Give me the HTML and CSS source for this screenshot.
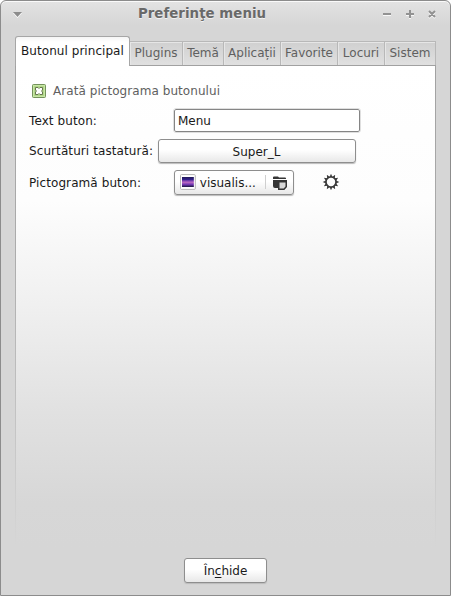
FILE: index.html
```
<!DOCTYPE html>
<html lang="ro">
<head>
<meta charset="utf-8">
<title>Preferinţe meniu</title>
<link rel="stylesheet" href="styles.css">
</head>
<body>
<div class="window">
  <header class="titlebar">
    <svg class="menu-arrow" width="9" height="7" viewBox="0 0 9 7"><path d="M0 2h9L4.500 7z" fill="#fff"/><path d="M0 1h9L4.500 6z" fill="#8c8c8c"/></svg>
    <h1 class="title">Preferinţe meniu</h1>
    <svg class="controls" width="56" height="12" viewBox="0 0 56 12" fill="none" stroke-width="2">
      <path stroke="#f8f8f8" d="M0 7h8M23 7h8M27 3v8M46 4l6 6M52 4l-6 6"/>
      <path stroke="#929292" d="M0 6h8M23 6h8M27 2v8M46 3l6 6M52 3l-6 6"/>
    </svg>
  </header>
  <nav class="tabs">
    <div class="tab active">Butonul principal</div>
    <div class="tab plugins">Plugins</div>
    <div class="tab theme">Temă</div>
    <div class="tab apps">Aplicații</div>
    <div class="tab favorites">Favorite</div>
    <div class="tab places">Locuri</div>
    <div class="tab system">Sistem</div>
  </nav>
  <main class="panel">
    <div class="check-row">
      <svg class="checkbox" width="14" height="14" viewBox="0 0 14 14"><rect x=".5" y=".5" width="13" height="13" rx="1" fill="#b1d888" stroke="#74925b"/><rect x="1.500" y="1.500" width="11" height="11" fill="none" stroke="#c7e6a6"/><path d="M3.500 3.500h2.500l1 1 1-1h2.500v2.500l-1 1 1 1v2.500h-2.500l-1-1-1 1h-2.500v-2.500l1-1-1-1z" fill="#fff" stroke="#66754f"/></svg>
      <span>Arată pictograma butonului</span>
    </div>
    <div class="row text-row"><span class="label">Text buton:</span><div class="entry">Menu</div></div>
    <div class="row key-row"><span class="label">Scurtături tastatură:</span><div class="button key">Super_L</div></div>
    <div class="row icon-row">
      <span class="label">Pictogramă buton:</span>
      <div class="button chooser">
        <svg class="thumb" width="16" height="16" viewBox="0 0 16 16"><defs><linearGradient id="sky" x2="0" y2="1"><stop stop-color="#211857"/><stop offset=".25" stop-color="#31208b"/><stop offset=".4" stop-color="#8a4ab8"/><stop offset=".55" stop-color="#b565be"/><stop offset=".75" stop-color="#7438b4"/><stop offset="1" stop-color="#19163f"/></linearGradient></defs><rect x=".5" y=".5" width="15" height="15" rx="1" fill="#fff" stroke="#b5b5b5"/><path fill="url(#sky)" d="M2 3h12v10H2z"/></svg>
        <span class="filename">visualis...</span>
        <span class="separator"></span>
        <svg class="folder" width="14" height="14" viewBox="0 0 14 14"><path d="M0 2.500V1.500Q0 .5 1 .5h4l1 1h6q1 0 1 1V3H0zM0 4h14v2H5v6H2q-2 0-2-2z" fill="#353535"/><path d="M5.750 5.750h7.500v5l-2.250 2.500h-5.250z" fill="#d8d8d8" stroke="#353535" stroke-width="1.500"/></svg>
      </div>
      <svg class="gear" width="18" height="18" viewBox="-9 -9 18 18" fill="none" stroke="#3b3b3b"><circle r="5" stroke-width="1.600"/><g fill="#3b3b3b" stroke="none"><path id="tooth" d="M-1.500-5L0-8.300 1.500-5z"/><use href="#tooth" transform="rotate(30)"/><use href="#tooth" transform="rotate(60)"/><use href="#tooth" transform="rotate(90)"/><use href="#tooth" transform="rotate(120)"/><use href="#tooth" transform="rotate(150)"/><use href="#tooth" transform="rotate(180)"/><use href="#tooth" transform="rotate(210)"/><use href="#tooth" transform="rotate(240)"/><use href="#tooth" transform="rotate(270)"/><use href="#tooth" transform="rotate(300)"/><use href="#tooth" transform="rotate(330)"/></g></svg>
    </div>
  </main>
  <footer class="actions"><div class="button close">În<u>c</u>hide</div></footer>
</div>
</body>
</html>
```

FILE: styles.css
```
* { box-sizing: border-box; }
body {
  margin: 0;
  background: #fff;
  font: 12px/16px "DejaVu Sans", sans-serif;
  color: #1a1a1a;
}
.window {
  display: flex;
  flex-direction: column;
  width: 451px;
  height: 596px;
  border: 1px solid #8c8c8c;
  border-radius: 6px 6px 0 0;
  background: linear-gradient(#e3e3e3, #d6d6d6 24px);
  box-shadow: inset 0 1px #fafafa;
  overflow: hidden;
}
.titlebar {
  display: flex;
  align-items: center;
  height: 35px;
  padding: 0 12px 10px;
}
.menu-arrow { margin-top: 2px; }
.title {
  flex: 1;
  margin: 0 0 0 -1px;
  text-align: center;
  font-size: 13.333px;
  letter-spacing: 0.05px;
  line-height: 18px;
  color: #696969;
  text-shadow: 0 1px #f2f2f2;
}
.controls { margin-right: -1px; }
.tabs {
  display: flex;
  align-items: flex-end;
  height: 29px;
  margin-left: 14px;
  flex: none;
}
.tab {
  height: 24px;
  border: solid #b8b8b8;
  border-width: 1px 1px 0 0;
  background: linear-gradient(#d0d0d0, #e0e0e0);
  box-shadow: inset 1px 1px #e6e6e6;
  color: #606060;
  text-align: center;
  line-height: 23px;
  white-space: nowrap;
}
.tab.active {
  position: relative;
  width: 115px;
  height: 30px;
  margin-bottom: -1px;
  border: 1px solid #a6a6a6;
  border-bottom: 0;
  border-radius: 3px 3px 0 0;
  background: linear-gradient(#f5f5f5, #fff 5px);
  box-shadow: none;
  color: #1a1a1a;
  letter-spacing: 0.05px;
  line-height: 28px;
}
.plugins { width: 53px; }
.theme { width: 41px; }
.apps { width: 57px; }
.favorites { width: 57px; }
.places { width: 47px; }
.system { width: 51px; }
.panel {
  flex: none;
  width: 421px;
  height: 483px;
  margin-left: 14px;
  padding: 17px 13px 0;
  border: solid;
  border-width: 1px;
  border-image: linear-gradient(#a1a1a1, #acacac 40%, #c4c4c4 75%, #d6d6d6) 1;
  background: linear-gradient(#fff, #fdfdfd 28%, #f1f1f1 48%, #e1e1e1 72%, #d7d7d7 91%, #d6d6d6);
}
.check-row {
  display: flex;
  align-items: center;
  gap: 7px;
  height: 16px;
  padding-left: 3px;
  color: #606060;
  letter-spacing: 0.06px;
}
.row { display: flex; align-items: center; }
.label {
  flex: none;
  width: 145px;
  padding-top: 1px;
  letter-spacing: 0.09px;
  white-space: nowrap;
}
.text-row { height: 24px; margin-top: 9px; }
.key-row { height: 25px; margin-top: 6px; }
.key-row .label { width: 129px; padding: 0; }
.icon-row { height: 26px; margin-top: 6px; }
.entry {
  width: 186px;
  height: 23px;
  border: 1px solid #858585;
  border-radius: 2px;
  outline: 1px solid #dfdfdf;
  outline-offset: 0;
  background: #fff;
  padding: 3px;
}
.button {
  border: 1px solid #8e8e8e;
  border-radius: 3px;
  background: linear-gradient(#fff 45%, #e8e8e8);
  box-shadow: 0 1px 1px #bbb;
  text-align: center;
}
.key { width: 198px; height: 24px; line-height: 24px; padding-right: 1px; }
.chooser {
  display: flex;
  align-items: center;
  width: 120px;
  height: 25px;
  padding: 0 6px 0 5px;
}
.thumb { margin-right: 4px; }
.filename { width: 66px; padding-top: 1px; text-align: left; }
.separator { width: 1px; height: 14px; background: #cfcfcf; margin-right: 7px; }
.folder { flex: none; margin-top: 1px; }
.gear { margin-left: 28px; }
.actions { display: flex; justify-content: center; padding-top: 10px; }
.close { width: 83px; height: 25px; line-height: 24px; }
.close u { text-decoration-thickness: 1px; text-underline-offset: 2px; }
```
